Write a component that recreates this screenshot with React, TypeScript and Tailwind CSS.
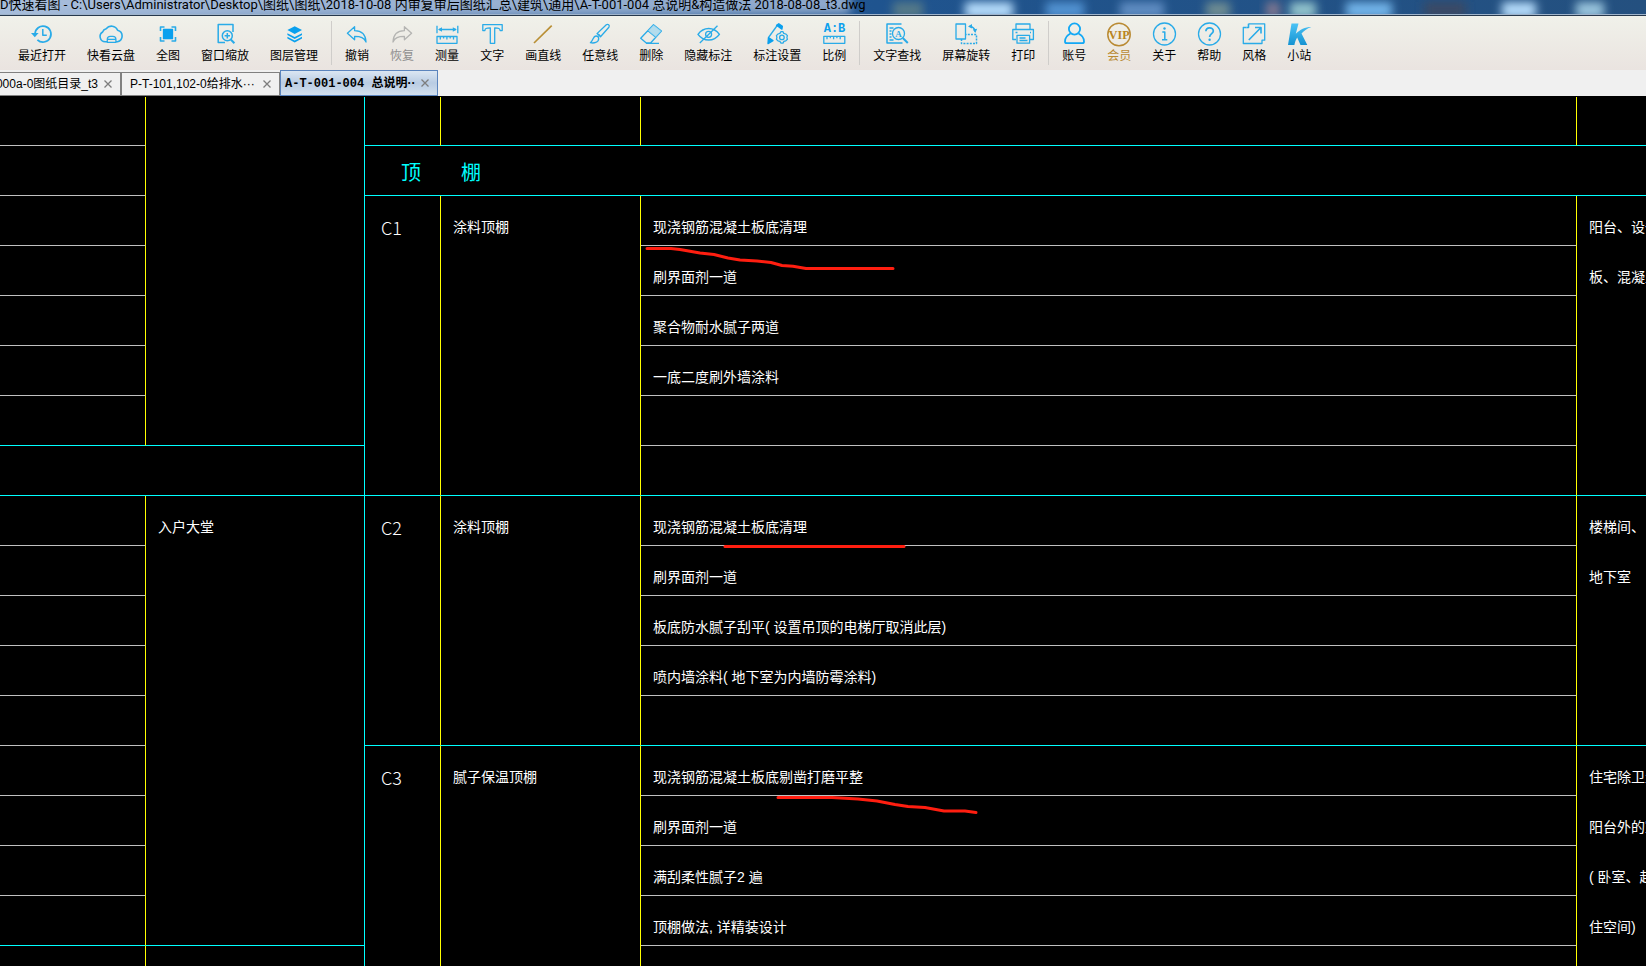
import React from 'react';

const BLUE = '#29abe8';

type IconProps = { children: React.ReactNode; color?: string };

function Icon({ children, color = BLUE }: IconProps) {
  return (
    <svg
      aria-hidden="true"
      className="block size-6 overflow-visible"
      viewBox="0 0 24 24"
      fill="none"
      stroke={color}
      strokeWidth="1.3"
      strokeLinejoin="round"
    >
      {children}
    </svg>
  );
}

const icons = {
  history: (
    <Icon>
      <path d="M5 12a8 8 0 1 1 2.4 5.8" strokeWidth="1.7" />
      <path d="M1 11h7.6l-3.8 4.2z" fill={BLUE} stroke="none" />
      <path d="M12.8 7v6.2h4" strokeWidth="1.5" />
    </Icon>
  ),
  cloud: (
    <Icon>
      <path
        d="M8 19.8H6.2A5.3 5.3 0 0 1 3.6 10 4.8 4.8 0 0 1 7.2 6.8 6.6 6.6 0 0 1 18.6 8.3 5.9 5.9 0 0 1 18.5 19.8H17"
        strokeWidth="1.6"
      />
      <path d="M8.3 20.3v-3a3 3 0 0 1 3-3h2.600a3 3 0 0 1 3 3v3zM8.3 17.3h8.600" />
    </Icon>
  ),
  fit: (
    <Icon>
      <path d="M7.5 7.3h9v9.4h-9z" fill="#0aa0ee" stroke="#0aa0ee" />
      <path d="M4.5 9V5h4M15.5 5h4v4M19.5 15v4h-4M8.5 19h-4v-4" strokeWidth="1.6" />
    </Icon>
  ),
  zoomWindow: (
    <Icon>
      <path d="M20 10V2.5H5.2v18H12" strokeWidth="1.5" />
      <circle cx="14.3" cy="13.7" r="5" strokeWidth="1.5" />
      <path d="M14.3 11v5.4M11.6 13.7H17" strokeWidth="1.5" />
      <path d="m17.8 17.5 3.6 3.7" strokeWidth="2" />
    </Icon>
  ),
  layers: (
    <Icon>
      <path d="M12.7 4.3 20 8l-7.3 4L5.4 8z" fill="#0aa0ee" stroke="none" />
      <path d="m5.4 11.3 7.3 3.8 7.3-3.8v1.6l-7.3 4-7.3-4z" fill="#0aa0ee" stroke="none" />
      <path d="m5.4 14.8 7.3 3.8 7.3-3.8v1.7l-7.3 4-7.3-4z" fill="#0aa0ee" stroke="none" />
    </Icon>
  ),
  undo: (
    <Icon>
      <path d="m2.4 11.2 7.2-6.4v3.9c7.3 0 11 3.4 11.4 11.3-2-4.4-5-5.6-11.4-5.6v3.4z" />
    </Icon>
  ),
  redo: (
    <Icon color="#b4b4b2">
      <path d="m21.6 11.2-7.2-6.4v3.9C7.1 8.7 3.4 12.1 3 20c2-4.4 5-5.6 11.4-5.6v3.4z" />
    </Icon>
  ),
  measure: (
    <Icon>
      <path d="M2 3.8v7.4M22.8 3.8v7.4M4 7.5h17" />
      <path d="m3 7.5 4-2.3v4.6zM21.8 7.5l-4-2.3v4.6z" fill={BLUE} stroke="none" />
      <path d="M2 14.5h20v6.8H2zM5.3 14.5v3M8.6 14.5v2M11.9 14.5v3M15.2 14.5v2M18.5 14.5v3" />
    </Icon>
  ),
  text: (
    <Icon>
      <path d="M2.8 2.6h19.4v6h-2.1c0-2-1.2-2.8-5.4-2.8v15.5h-4.4V5.8C6.1 5.8 4.9 6.6 4.9 8.6H2.8z" />
    </Icon>
  ),
  line: (
    <Icon color="#b98f35">
      <path d="M3 21 20.7 3.7" strokeWidth="1.7" />
    </Icon>
  ),
  brush: (
    <Icon>
      <path d="M9 11.6 18.3 2.7c1.7-1 3.8.6 2.6 2.5l-8.4 9.5zM9 11.6c1.7.3 3 1.5 3.5 3.1" />
      <path d="M8 14c-3 0-2.6 4-5.6 6.7 3.3.8 8.3 0 8.3-4.2C10.7 15 9.5 14 8 14z" />
    </Icon>
  ),
  eraser: (
    <Icon>
      <path d="M14.5 2.8 22.4 9 11.6 21H7.3L1.7 16.3zM9 8.8l7.8 6.5M7 21.3h13" />
      <path d="M14.5 2.8 22.4 9l-5.6 6.3L9 8.8z" fill="#9fd6ee" stroke="none" opacity=".75" />
    </Icon>
  ),
  hide: (
    <Icon>
      <path d="M2 12.4C7.6 4.6 17.8 4.6 23.4 12.4 17.8 20 7.6 20 2 12.4z" strokeWidth="1.5" />
      <circle cx="12.6" cy="12.3" r="3" />
      <path d="M21.5 3.8 3.8 21" />
    </Icon>
  ),
  settings: (
    <Icon>
      <path d="m3.5 15.5 8.7-12" />
      <path d="m11.5 3.3 2.3-1.6 3.6 2.5-.5 2.9z" fill="#0aa0ee" stroke="#0aa0ee" />
      <path d="m3.4 15.6 4.6 3-5 3z" fill="#0aa0ee" stroke="#0aa0ee" />
      <path d="m16 9.6 2 .1.8 1.7 2 .6 1.6 1.6-.5 1.8.5 1.9-1.6 1.6-1.9.5-.9 1.7H16l-1.1-1.7-1.9-.5-1.6-1.6.5-1.9-.5-1.8L13 12l1.9-.6z" />
      <circle cx="16.9" cy="15.4" r="2.3" />
    </Icon>
  ),
  ratio: (
    <Icon>
      <text
        x="12.5"
        y="10"
        textAnchor="middle"
        fontSize="12"
        fontWeight="700"
        fontFamily="Liberation Mono, monospace"
        fill="#0aa0ee"
        stroke="none"
      >
        A:B
      </text>
      <path d="M1.8 14.3h21v7h-21zM5 14.3v3M8.3 14.3v2M11.6 14.3v3M14.9 14.3v2M18.2 14.3v3" />
    </Icon>
  ),
  find: (
    <Icon>
      <path d="M16.5 2H2v19h15.5M4.5 6h4M4.5 9h2M4.5 12h2M4.5 15h2M4.5 18h4" strokeWidth="1.5" />
      <circle cx="13.5" cy="11.5" r="6" />
      <text
        x="13.5"
        y="15"
        textAnchor="middle"
        fontSize="9"
        fontWeight="700"
        fontFamily="Liberation Serif, serif"
        fill={BLUE}
        stroke="none"
      >
        A
      </text>
      <path d="m17.8 16 5 5" strokeWidth="2" />
    </Icon>
  ),
  rotate: (
    <Icon>
      <path d="M2 2h9.5v15H2z" />
      <path d="M7.5 17v4.5h15v-9H12" strokeDasharray="2 1.2" strokeWidth="1.5" />
      <path d="M15.5 4.3c3 .3 5 2 5.6 5" strokeWidth="1.5" />
      <path d="m14 4.4 4-2.4v4.6zM21.3 11l-2.5-3.5 4.4-.7z" fill={BLUE} stroke="none" />
    </Icon>
  ),
  print: (
    <Icon>
      <path d="M5 7.5V2h14v5.5M5 17.5H1.8v-10h20.6v10H19" />
      <path d="M6 13.3h12.6v7.9H6zM8.5 16h6M8.5 18.5h8M4.5 10.5h2M19 10.5h1" />
    </Icon>
  ),
  user: (
    <Icon color="#12a8f5">
      <circle cx="12.5" cy="7" r="5.6" strokeWidth="1.8" />
      <path
        d="M8.5 11.5C4.5 13.5 3 17 3 19.5c0 1 .7 1.7 1.7 1.7h15.6c1 0 1.7-.7 1.7-1.7 0-2.5-1.5-6-5.5-8"
        strokeWidth="1.8"
      />
    </Icon>
  ),
  vip: (
    <Icon color="#b98a33">
      <circle cx="12" cy="12.5" r="11.2" strokeWidth="1.5" />
      <text
        x="12.2"
        y="16.7"
        textAnchor="middle"
        fontSize="12"
        fontWeight="700"
        fontFamily="Liberation Serif, serif"
        fill="#b98420"
        stroke="none"
      >
        VIP
      </text>
    </Icon>
  ),
  about: (
    <Icon>
      <circle cx="12.5" cy="12" r="11" />
      <path d="M10.3 10h2.5v7.5M10 17.7h5.3" strokeWidth="1.5" />
      <circle cx="12.5" cy="6.5" r="1.2" fill={BLUE} stroke="none" />
    </Icon>
  ),
  help: (
    <Icon>
      <circle cx="12.5" cy="12" r="11" />
      <path d="M8.9 9.3c0-4.6 7.4-4.6 7.4-.3 0 2.6-3.7 2.8-3.7 6" strokeWidth="1.7" />
      <circle cx="12.6" cy="17.7" r="1.2" fill={BLUE} stroke="none" />
    </Icon>
  ),
  style: (
    <Icon>
      <path d="M6.5 1.8h16.2v16.4H20v3.3H1.3V5.5h3.2" />
      <path d="M4.5 5.5h2V1.8M6.8 18 18.5 6M13 5.5h6v6" strokeWidth="1.6" />
    </Icon>
  ),
  station: (
    <Icon>
      <defs>
        <linearGradient id="station-fill" x1="0" y1="0" x2="0" y2="1">
          <stop offset="0" stopColor="#4cc3f5" />
          <stop offset="1" stopColor="#1593d2" />
        </linearGradient>
      </defs>
      <g fill="url(#station-fill)" stroke="none">
        <path d="M4.5 1.5h7L8.8 11.7C13 7.5 18 5 24.3 5c-4.5 1.6-7.6 3.9-9.8 6.6L20.3 23h-6.8l-3.3-7.5c-1.4 2.2-2.3 4.7-2.8 7.5H1z" />
      </g>
    </Icon>
  ),
};

type Tool = { icon: keyof typeof icons; label: string; tone?: string };

const toolGroups: Tool[][] = [
  [
    { icon: 'history', label: '最近打开' },
    { icon: 'cloud', label: '快看云盘' },
    { icon: 'fit', label: '全图' },
    { icon: 'zoomWindow', label: '窗口缩放' },
    { icon: 'layers', label: '图层管理' },
  ],
  [
    { icon: 'undo', label: '撤销' },
    { icon: 'redo', label: '恢复', tone: 'text-[#8f8f8f]' },
    { icon: 'measure', label: '测量' },
    { icon: 'text', label: '文字' },
    { icon: 'line', label: '画直线' },
    { icon: 'brush', label: '任意线' },
    { icon: 'eraser', label: '删除' },
    { icon: 'hide', label: '隐藏标注' },
    { icon: 'settings', label: '标注设置' },
    { icon: 'ratio', label: '比例' },
  ],
  [
    { icon: 'find', label: '文字查找' },
    { icon: 'rotate', label: '屏幕旋转' },
    { icon: 'print', label: '打印' },
  ],
  [
    { icon: 'user', label: '账号' },
    { icon: 'vip', label: '会员', tone: 'text-[#b98a33]' },
    { icon: 'about', label: '关于' },
    { icon: 'help', label: '帮助' },
    { icon: 'style', label: '风格' },
    { icon: 'station', label: '小站' },
  ],
];

const glassSpots = [
  { x: 893, w: 30, color: '#6d8a86', o: 0.7 },
  { x: 965, w: 48, color: '#b5dcfb', o: 1 },
  { x: 1046, w: 38, color: '#5ea3e4', o: 0.8 },
  { x: 1120, w: 44, color: '#6f9bd0', o: 0.8 },
  { x: 1206, w: 24, color: '#8fa596', o: 0.7 },
  { x: 1266, w: 14, color: '#a98794', o: 0.7 },
  { x: 1290, w: 26, color: '#9fd0d4', o: 0.9 },
  { x: 1346, w: 46, color: '#7cc0f5', o: 0.9 },
  { x: 1424, w: 42, color: '#3c4962', o: 0.9 },
  { x: 1502, w: 34, color: '#b5dcfb', o: 1 },
  { x: 1576, w: 28, color: '#a7d3e8', o: 0.9 },
];

function TitleBar() {
  return (
    <header className="relative flex h-4 shrink-0 items-start overflow-hidden border-b border-[#26384c] bg-linear-to-r from-[#a3bbd9] via-[#1f548f] via-53% to-[#24507f]">
      <svg aria-hidden="true" className="absolute inset-0 h-full w-full">
        <defs>
          <filter id="glass" x="-50%" y="-100%" width="200%" height="300%">
            <feGaussianBlur stdDeviation="5" />
          </filter>
        </defs>
        <rect x="-20" y="-8" width="870" height="22" fill="#a9bedb" opacity=".8" filter="url(#glass)" />
        {glassSpots.map((s) => (
          <rect key={s.x} x={s.x} y="2" width={s.w} height="16" fill={s.color} opacity={s.o} filter="url(#glass)" />
        ))}
      </svg>
      <h1 className="relative h-[15px] w-full border-b border-[#9fb4cb] font-[Roboto,'Noto_Sans_CJK_SC',sans-serif] text-[13px] leading-[10px] whitespace-nowrap text-black">
        D快速看图 - C:\Users\Administrator\Desktop\图纸\图纸\2018-10-08 内审复审后图纸汇总\建筑\通用\A-T-001-004
        总说明&amp;构造做法 2018-08-08_t3.dwg
      </h1>
    </header>
  );
}

function Toolbar() {
  return (
    <nav
      aria-label="工具栏"
      className="flex h-[54px] shrink-0 bg-linear-to-b from-[#f0f1ea] to-[#eae4e0] pl-[18px]"
    >
      {toolGroups.map((group, i) => (
        <React.Fragment key={i}>
          {i > 0 && <span className="mx-[13px] my-[5px] w-px bg-[#cfcdca]" />}
          <div className="flex gap-[21px]">
            {group.map((tool) => (
              <button
                key={tool.label}
                type="button"
                className="flex flex-col items-center gap-0.5 pt-1.5 text-xs leading-4 whitespace-nowrap text-black"
              >
                {icons[tool.icon]}
                <span className={tool.tone}>{tool.label}</span>
              </button>
            ))}
          </div>
        </React.Fragment>
      ))}
    </nav>
  );
}

function CloseButton() {
  return (
    <button type="button" aria-label="关闭" className="ml-1.5 shrink-0 text-[#7d7d7d]">
      <svg aria-hidden="true" className="block size-2" viewBox="0 0 8 8" stroke="currentColor" strokeWidth="1.3">
        <path d="m.5.5 7 7M7.5.5l-7 7" />
      </svg>
    </button>
  );
}

function TabBar() {
  return (
    <div className="flex h-[26px] shrink-0 items-end bg-[#f0f0f0] text-xs text-black">
      <div className="flex h-6 w-[122px] items-center justify-end overflow-hidden border-t border-r-2 border-b border-[#808080] pr-2">
        <button type="button" className="whitespace-nowrap">
          000a-0图纸目录_t3
        </button>
        <CloseButton />
      </div>
      <div className="flex h-6 w-[158px] items-center justify-between border-t border-r border-b border-[#808080] px-2">
        <button type="button" className="whitespace-nowrap">
          P-T-101,102-0给排水···
        </button>
        <CloseButton />
      </div>
      <div className="flex h-[26px] w-[158px] items-center justify-between border border-[#5b84bd] bg-linear-to-b from-[#dbe6f2] via-[#b9cce3] to-[#d3e0ee] pr-2 pl-1">
        <button type="button" className="font-bold whitespace-nowrap">
          <span className="font-['Liberation_Mono','Noto_Sans_CJK_SC',monospace]">A-T-001-004 总说明</span>··
        </button>
        <CloseButton />
      </div>
    </div>
  );
}

type Section = { code: string; name: string; steps: string[]; places: string[] };

const sections: Section[] = [
  {
    code: 'C1',
    name: '涂料顶棚',
    steps: ['现浇钢筋混凝土板底清理', '刷界面剂一道', '聚合物耐水腻子两道', '一底二度刷外墙涂料', '', ''],
    places: ['阳台、设备', '板、混凝土'],
  },
  {
    code: 'C2',
    name: '涂料顶棚',
    steps: [
      '现浇钢筋混凝土板底清理',
      '刷界面剂一道',
      '板底防水腻子刮平( 设置吊顶的电梯厅取消此层)',
      '喷内墙涂料( 地下室为内墙防霉涂料)',
      '',
    ],
    places: ['楼梯间、电', '地下室'],
  },
  {
    code: 'C3',
    name: '腻子保温顶棚',
    steps: ['现浇钢筋混凝土板底剔凿打磨平整', '刷界面剂一道', '满刮柔性腻子2 遍', '顶棚做法, 详精装设计', ''],
    places: ['住宅除卫生', '阳台外的室', '( 卧室、起', '住空间)'],
  },
];

const line = 'h-[50px] pt-3 align-middle whitespace-nowrap';

function RoomTable() {
  return (
    <table className="w-[365px] shrink-0 table-fixed border-separate border-spacing-0 self-start border-r border-[#00ffff]">
      <colgroup>
        <col className="w-[146px]" />
        <col />
      </colgroup>
      <tbody>
        {Array.from({ length: 7 }, (_, i) => (
          <tr key={i}>
            <td
              className={
                i === 0
                  ? 'h-[49px] border-r border-b border-r-[#ffff00] border-b-[#c0c0c0]'
                  : i === 6
                    ? 'h-[50px] border-r border-b border-r-[#ffff00] border-b-[#00ffff]'
                    : 'h-[50px] border-r border-b border-r-[#ffff00] border-b-[#c0c0c0]'
              }
            />
            {i === 0 && <td rowSpan={7} className="border-b border-[#00ffff]" />}
          </tr>
        ))}
        <tr>
          <td colSpan={2} className="h-[50px] border-b border-[#00ffff]" />
        </tr>
        {Array.from({ length: 9 }, (_, i) => (
          <tr key={i}>
            <td
              className={
                i === 8
                  ? 'h-[50px] border-r border-b border-r-[#ffff00] border-b-[#00ffff]'
                  : 'h-[50px] border-r border-b border-r-[#ffff00] border-b-[#c0c0c0]'
              }
            />
            {i === 0 && (
              <td rowSpan={9} className="border-b border-[#00ffff] pl-3 align-top">
                <div className="flex h-[50px] items-center pt-3">入户大堂</div>
              </td>
            )}
          </tr>
        ))}
        <tr>
          <td className="h-[50px] border-r border-[#ffff00]" />
          <td />
        </tr>
      </tbody>
    </table>
  );
}

function CeilingTable() {
  return (
    <table className="w-full min-w-0 table-fixed border-separate border-spacing-0 text-left">
      <colgroup>
        <col className="w-[76px]" />
        <col className="w-[200px]" />
        <col />
        <col className="w-[69px]" />
      </colgroup>
      <tbody>
        <tr>
          <td className="h-[49px] border-r border-b border-r-[#ffff00] border-b-[#00ffff]" />
          <td className="border-r border-b border-r-[#ffff00] border-b-[#00ffff]" />
          <td className="border-r border-b border-r-[#ffff00] border-b-[#00ffff]" />
          <td className="border-b border-[#00ffff]" />
        </tr>
        <tr>
          <th
            colSpan={4}
            className="h-[50px] border-b border-[#00ffff] pt-1 pl-9 text-xl leading-6 font-normal text-[#00ffff]"
          >
            顶　　棚
          </th>
        </tr>
        {sections.map((s) =>
          s.steps.map((step, i) => (
            <tr key={s.code + i}>
              {i === 0 && (
                <>
                  <td
                    rowSpan={s.steps.length}
                    className="border-r border-b border-r-[#ffff00] border-b-[#00ffff] pl-4 align-top"
                  >
                    <div className="flex h-[50px] items-center pt-3 font-['Noto_Sans_CJK_SC',sans-serif] text-lg font-light">
                      {s.code}
                    </div>
                  </td>
                  <td
                    rowSpan={s.steps.length}
                    className="border-r border-b border-r-[#ffff00] border-b-[#00ffff] pl-3 align-top"
                  >
                    <div className="flex h-[50px] items-center pt-3">{s.name}</div>
                  </td>
                </>
              )}
              <td
                className={
                  i === s.steps.length - 1
                    ? `${line} border-r border-b border-r-[#ffff00] border-b-[#00ffff] pl-3`
                    : `${line} border-r border-b border-r-[#ffff00] border-b-[#c0c0c0] pl-3`
                }
              >
                {step}
              </td>
              {i === 0 && (
                <td rowSpan={s.steps.length} className="overflow-hidden border-b border-[#00ffff] pl-3 align-top">
                  {s.places.map((place) => (
                    <div key={place} className="flex h-[50px] items-center pt-3 whitespace-nowrap">
                      {place}
                    </div>
                  ))}
                </td>
              )}
            </tr>
          )),
        )}
      </tbody>
    </table>
  );
}

function Markup() {
  return (
    <svg
      aria-hidden="true"
      className="pointer-events-none absolute top-0 left-0 h-full w-full"
      fill="none"
      stroke="#ff1e10"
      strokeWidth="3"
      strokeLinecap="round"
      strokeLinejoin="round"
    >
      <path d="M647 152.5h24l9 1 20 3.500 14 1.500 14 3.500 12 2 17 1 14 1.500 11 3 11 .8 13 2.200h87" />
      <path d="M725 450.5h179" />
      <path d="M778 701.5h54l26 1.500 19 2 18 3.500 13 2 17 1 19 3.500h21l11 1.500" />
    </svg>
  );
}

export default function App() {
  return (
    <div className="flex h-screen flex-col overflow-hidden bg-black font-['Liberation_Sans','Noto_Sans_CJK_SC',sans-serif]">
      <TitleBar />
      <Toolbar />
      <TabBar />
      <main className="relative flex min-h-0 flex-1 overflow-hidden bg-black pt-px text-sm leading-5 text-white">
        <RoomTable />
        <div className="min-w-0 flex-1 overflow-hidden">
          <CeilingTable />
        </div>
        <Markup />
      </main>
    </div>
  );
}
